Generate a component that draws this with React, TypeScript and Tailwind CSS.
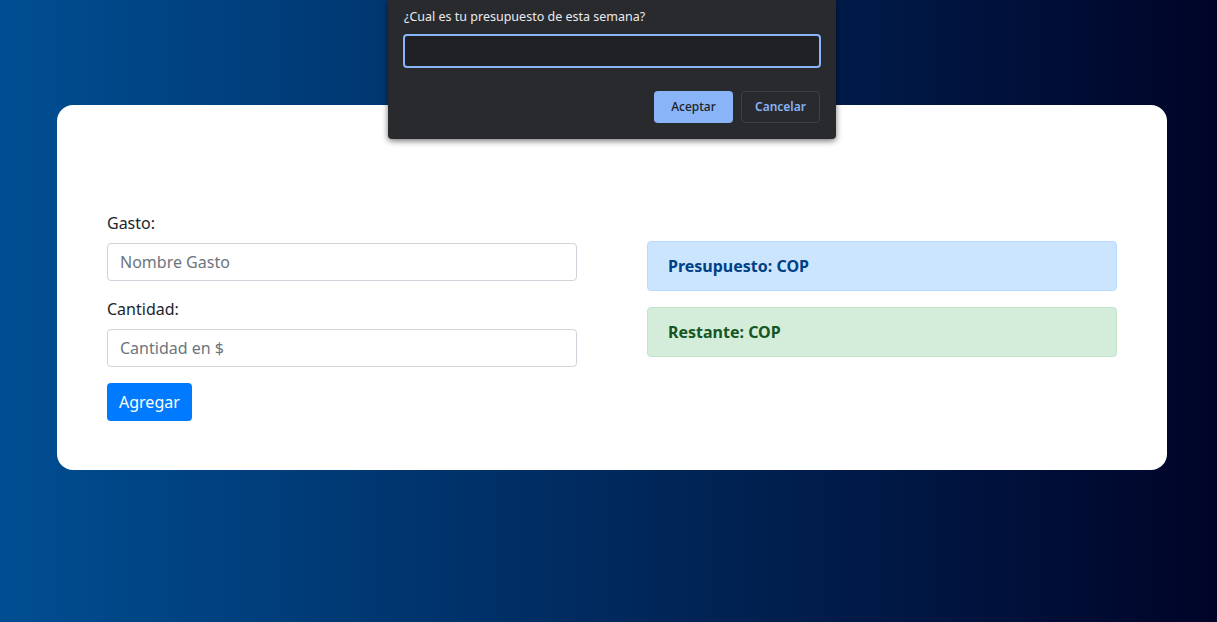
import React from 'react';

const font = { fontFamily: '"Noto Sans", "Open Sans", Arial, sans-serif' };

function PromptDialog() {
  return (
    <div
      className="absolute left-[388px] top-0 w-[448px] h-[139px] bg-[#292a2d] rounded-b-[4px] shadow-[0_2px_6px_rgba(0,0,0,0.55)] pl-[16px] pr-[15px] pt-[8px]"
      style={font}
    >
      <p className="text-[12.5px] leading-[18px] text-[#e8eaed]">¿Cual es tu presupuesto de esta semana?</p>
      <div className="mt-[8px] -ml-[1px] h-[34px] w-[418px] rounded-[4px] border-2 border-[#8ab4f8] bg-[#202124]" />
      <div className="mt-[23px] flex justify-end gap-[8px] pr-[1px]">
        <button className="h-[32px] w-[79px] rounded-[4px] bg-[#8ab4f8] text-[12px] font-medium text-[#202124]">
          Aceptar
        </button>
        <button className="h-[32px] w-[79px] rounded-[4px] border border-[#3c4043] text-[12px] font-semibold text-[#8ab4f8]">
          Cancelar
        </button>
      </div>
    </div>
  );
}

export default function App() {
  return (
    <div
      className="relative min-h-[622px] w-full bg-[linear-gradient(to_right,#004e92,#000428)] pt-[105px]"
      style={font}
    >
      <div className="ml-[57px] w-[1110px] h-[365px] rounded-[16px] bg-white px-[50px] pt-[106px]">
        <div className="flex gap-[70px]">
          <form className="w-[470px] text-[16px] text-[#212529]">
            <label className="block leading-[24px] mb-[8px]">Gasto:</label>
            <input
              className="block h-[38px] w-full rounded-[4px] border border-[#ced4da] px-[12px] text-[16px] placeholder:text-[#6c757d] outline-none"
              placeholder="Nombre Gasto"
            />
            <label className="mt-[16px] block leading-[24px] mb-[8px]">Cantidad:</label>
            <input
              className="block h-[38px] w-full rounded-[4px] border border-[#ced4da] px-[12px] text-[16px] placeholder:text-[#6c757d] outline-none"
              placeholder="Cantidad en $"
            />
            <button
              type="button"
              className="mt-[16px] h-[38px] rounded-[4px] bg-[#007bff] px-[12px] text-[16px] text-white"
            >
              Agregar
            </button>
          </form>
          <div className="w-[470px] pt-[30px] flex flex-col gap-[16px]">
            <div className="h-[50px] flex items-center rounded-[4px] border border-[#b8daff] bg-[#cce5ff] px-[20px] text-[16px] font-bold text-[#004085]">
              Presupuesto: COP
            </div>
            <div className="h-[50px] flex items-center rounded-[4px] border border-[#c3e6cb] bg-[#d4edda] px-[20px] text-[16px] font-bold text-[#155724]">
              Restante: COP
            </div>
          </div>
        </div>
      </div>
      <PromptDialog />
    </div>
  );
}
